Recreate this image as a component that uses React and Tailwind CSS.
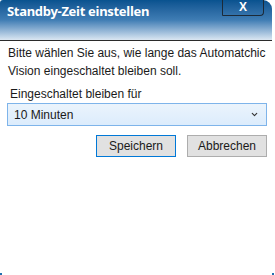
import { ChevronDown } from 'lucide-react'

function App() {
  return (
    <div className="w-[275px] h-[275px] bg-white relative overflow-hidden font-['Liberation_Sans',sans-serif] text-[12px] text-[#1a1a1a]">
      {/* Title bar */}
      <div className="h-[41px] w-[272px] rounded-tl-[3px] rounded-tr-[9px] bg-gradient-to-b from-[#08528f] via-[#3f7db4] to-[#dbe7f2] border-b border-[#2b2b2b] flex items-start justify-between">
        <div className="pl-[7px] pt-[2px] text-white font-bold text-[13px] font-['Noto_Sans',sans-serif] tracking-[-0.3px]">
          Standby-Zeit einstellen
        </div>
        <div className="mr-[8px] w-[42px] h-[16px] border border-t-0 border-[#1c2a38] rounded-br-[4px] rounded-bl-[1px] text-white font-bold text-[12px] leading-[15px] text-center font-['Liberation_Sans',sans-serif]">
          X
        </div>
      </div>

      {/* Content */}
      <div className="px-[8px] pt-[3px]">
        <p className="leading-[18px]">
          Bitte wählen Sie aus, wie lange das Automatchic Vision eingeschaltet bleiben soll.
        </p>
        <div className="mt-[6px] pl-[2px] leading-[16px]">Eingeschaltet bleiben für</div>

        <div className="mt-[1px] w-[260px] -ml-px h-[23px] border border-[#7eb4ea] bg-gradient-to-b from-[#ebf4fc] to-[#dcecfc] flex items-center justify-between pl-[6px] pr-[7px]">
          <span>10 Minuten</span>
          <ChevronDown size={9} strokeWidth={3} className="text-[#333]" />
        </div>

        <div className="mt-[9px] flex justify-end gap-[11px] w-[259px]">
          <button className="w-[80px] h-[22px] border border-[#0078d7] bg-[#e1e1e1] text-[12px]">
            Speichern
          </button>
          <button className="w-[80px] h-[22px] border border-[#adadad] bg-[#e1e1e1] text-[12px]">
            Abbrechen
          </button>
        </div>
      </div>

      {/* frame corners */}
      <div className="absolute left-0 bottom-0 w-[2px] h-[2px] bg-[#1f6fb0]" />
      <div className="absolute right-[1px] bottom-0 w-[2px] h-[2px] bg-[#1f6fb0]" />
    </div>
  )
}

export default App
